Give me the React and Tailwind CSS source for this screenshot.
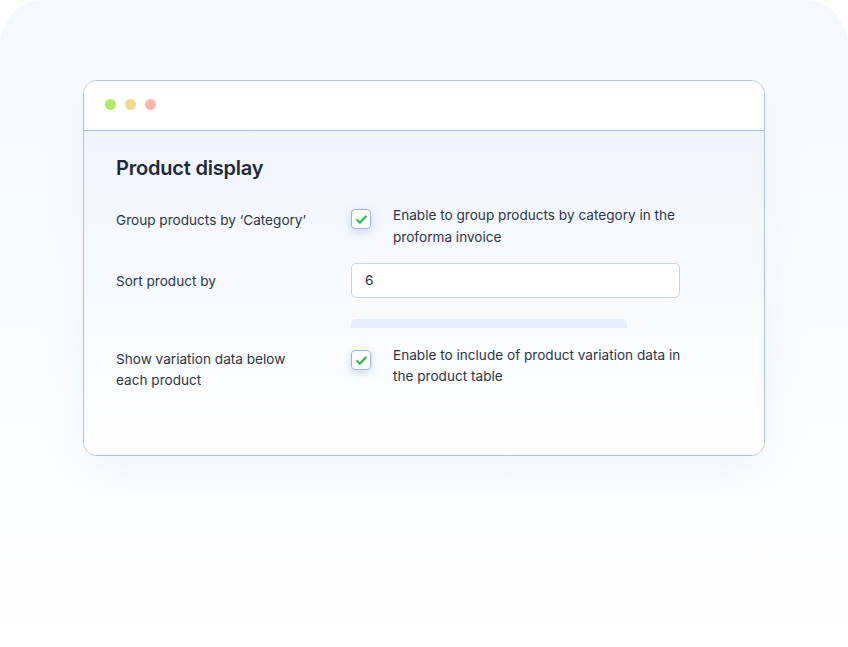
export default function App() {
  return (
    <div className="w-[848px] h-[647px] bg-white overflow-hidden" style={{ fontFamily: 'Inter, "Noto Sans", sans-serif' }}>
      <div className="w-full h-full rounded-t-[44px] bg-gradient-to-b from-[#f5f9fe] via-[#f9fbff] to-white pt-[80px] px-[83px]">
        <div className="w-[682px] h-[376px] rounded-[14px] border border-[#a9c3ef] bg-white overflow-hidden flex flex-col shadow-[0_20px_40px_rgba(220,232,250,0.3)]">
          {/* Title bar */}
          <div className="h-[50px] shrink-0 border-b border-[#a9c3ef] bg-white flex items-center gap-[9px] pl-[21px] pb-[3px]">
            <span className="w-[11px] h-[11px] rounded-full bg-[#b3ea6b]" />
            <span className="w-[11px] h-[11px] rounded-full bg-[#f5d98f]" />
            <span className="w-[11px] h-[11px] rounded-full bg-[#fbb6aa]" />
          </div>

          {/* Body */}
          <div className="flex-1 bg-gradient-to-b from-[#f0f4fd] to-white pl-[32px] pt-[23px] text-[13.6px] text-[#2b3646]">
            <h2 className="text-[20px] leading-[28px] font-semibold text-[#1f2937] tracking-[-0.2px]">Product display</h2>

            <div className="mt-[22px] flex">
              <div className="w-[235px] pt-[5px] leading-[22px]">Group products by ‘Category’</div>
              <Check />
              <p className="ml-[22px] w-[300px] leading-[22px]">
                Enable to group products by category in the proforma invoice
              </p>
            </div>

            <div className="mt-[15px] flex items-center">
              <div className="w-[235px] leading-[22px]">Sort product by</div>
              <div className="w-[329px] h-[35px] rounded-[5px] border border-[#c5d4ee] bg-white flex items-center pl-[13px]">
                6
              </div>
            </div>

            <div className="mt-[21px] ml-[235px] w-[276px] h-[9px] rounded-t-[5px] bg-[#e6edfc]" />

            <div className="mt-[17px] flex">
              <div className="w-[235px] pt-[4px] leading-[21px]">
                Show variation data below
                <br />
                each product
              </div>
              <Check />
              <p className="ml-[22px] w-[300px] leading-[21px]">
                Enable to include of product variation data in the product table
              </p>
            </div>
          </div>
        </div>
      </div>
    </div>
  )
}

function Check() {
  return (
    <div className="mt-[5px] w-[20px] h-[20px] shrink-0 rounded-[4px] border-[1.5px] border-[#97b5ee] bg-white flex items-center justify-center shadow-[0_3px_8px_rgba(150,180,235,0.45)]">
      <svg width="13" height="13" viewBox="0 0 24 24" fill="none" stroke="#2db84d" strokeWidth="4" strokeLinecap="round" strokeLinejoin="round">
        <path d="M4 13l5 5L20 6.5" />
      </svg>
    </div>
  )
}
